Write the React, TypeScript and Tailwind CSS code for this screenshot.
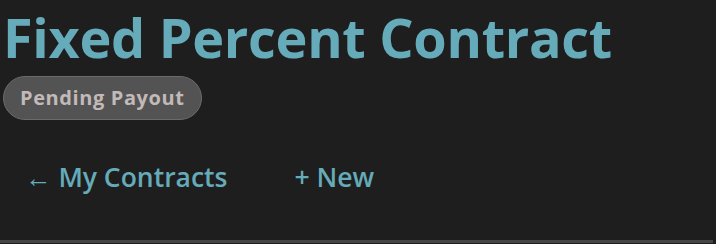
import React from "react";

export default function App() {
  return (
    <div className="w-[716px] h-[244px] bg-[#1e1e1e] overflow-hidden font-['Open_Sans',sans-serif] flex flex-col">
      <h1 className="text-[54px] font-bold leading-none text-[#65abba] pl-[3px] pt-[10px] tracking-[-0.3px]">
        Fixed Percent Contract
      </h1>
      <div className="pl-[3px] mt-[12px]">
        <span className="inline-flex items-center h-[44px] px-[16px] rounded-full bg-[#535353] border border-[#6a6a6a] text-[20px] font-bold tracking-[0.6px] text-[#c2b9b9]">
          Pending Payout
        </span>
      </div>
      <nav className="flex items-center gap-[67px] pl-[25px] mt-[38px] text-[26.5px] font-semibold text-[#65abba]">
        <a href="#">← My Contracts</a>
        <a href="#">+ New</a>
      </nav>
      <div className="flex-1" />
      <div className="h-[3px] w-[713px] bg-[#454545] mb-[1px]" />
    </div>
  );
}
